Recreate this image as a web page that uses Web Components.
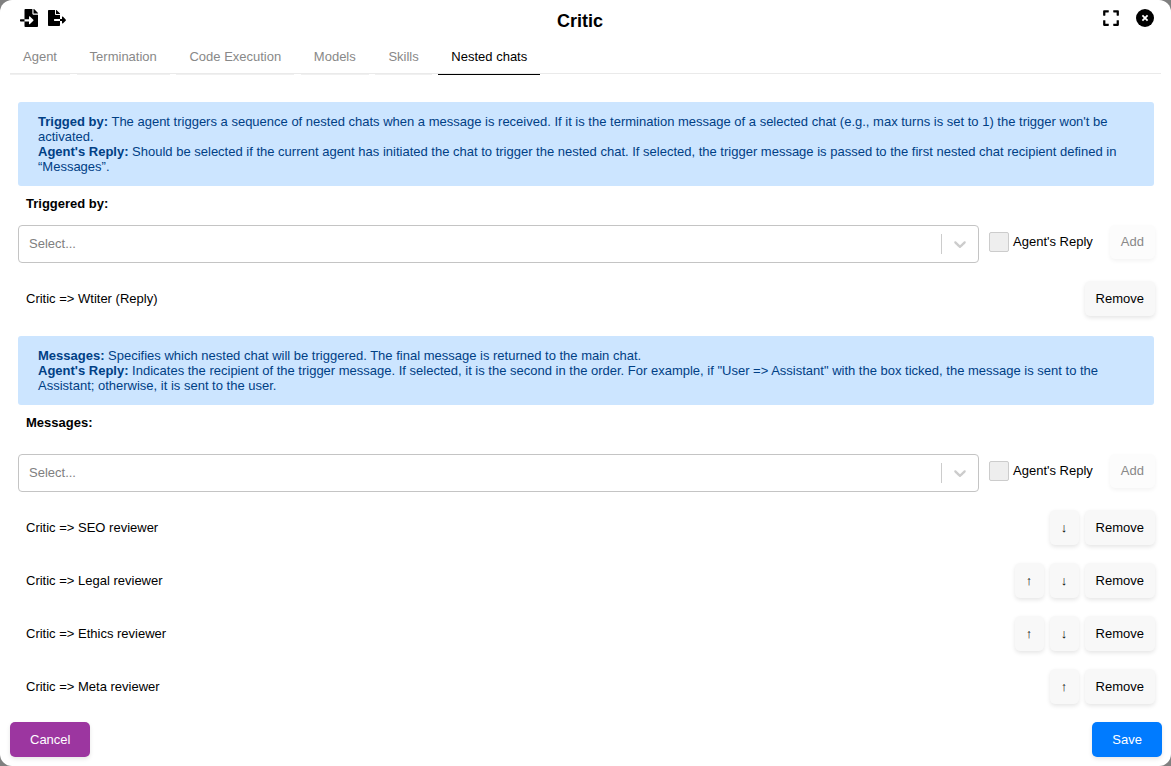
<!DOCTYPE html>
<html lang="en">
<head>
<meta charset="utf-8">
<meta name="viewport" content="width=device-width, initial-scale=1">
<title>Critic</title>
<style>
  html { background: #808080; }
  body { margin: 0; font: 13px/15px "Liberation Sans", Arial, sans-serif; color: #000; }
</style>
</head>
<body>
<agent-dialog></agent-dialog>
<script>
const define = (name, html, setup) => {
  const template = document.createElement('template');
  template.innerHTML = '<style>*{box-sizing:border-box}button,select{font:inherit;margin:0}</style>' + html;
  customElements.define(name, class extends HTMLElement {
    connectedCallback() {
      if (this.shadowRoot) return;
      this.attachShadow({ mode: 'open' }).append(template.content.cloneNode(true));
      if (setup) setup(this, this.shadowRoot);
    }
  });
};

define('ui-button', `
  <style>
    :host { display: block; flex: none; }
    button { display: block; height: 35px; min-width: 29px; padding: 0 11px; border: 0; border-radius: 5px;
      background: #f8f8f8; color: #000; box-shadow: 0 2px 4px rgba(0,0,0,.1); cursor: pointer; }
    button:disabled { height: 34px; padding-bottom: 1px; background: #fcfcfc; color: #888; box-shadow: 0 2px 4px rgba(0,0,0,.05); cursor: default; }
    :host([kind]) button { padding: 0 20px; color: #fff; }
    :host([kind=cancel]) button { background: #9c36a0; }
    :host([kind=save]) button { background: #007bff; }
  </style>
  <button type="button"><slot></slot></button>`, (host, root) => {
  const button = root.querySelector('button');
  button.disabled = host.hasAttribute('disabled');
  if (host.hasAttribute('label')) button.setAttribute('aria-label', host.getAttribute('label'));
});

define('icon-button', `
  <style>
    :host { display: block; }
    button { display: grid; place-items: center; width: 18px; height: 18px; padding: 0; border: 0; background: none; cursor: pointer; }
    ::slotted(svg) { display: block; width: 18px; height: 18px; fill: #000; }
  </style>
  <button type="button"><slot></slot></button>`, (host, root) => {
  root.querySelector('button').setAttribute('aria-label', host.getAttribute('label'));
});

define('dialog-header', `
  <style>
    :host { display: grid; grid-template-columns: 1fr auto 1fr; align-items: start; padding: 9px 17px 0 6px; height: 40px; }
    .group { display: flex; gap: 10px; padding-left: 14px; }
    .end { justify-content: flex-end; gap: 16px; }
    h1 { margin: 0; font-size: 18px; line-height: 24px; font-weight: bold; }
  </style>
  <div class="group">
    <icon-button label="Import"><svg viewBox="0 0 512 512"><path d="M16 288c-8.8 0-16 7.2-16 16v32c0 8.8 7.2 16 16 16h112v-64zm489-183L407.1 7c-4.5-4.5-10.6-7-17-7H384v128h128v-6.1c0-6.3-2.5-12.4-7-16.9zm-153 31V0H152c-13.3 0-24 10.7-24 24v264h128v-65.2c0-14.3 17.3-21.4 27.4-11.3L379 308c6.6 6.7 6.6 17.4 0 24l-95.7 96.4c-10.1 10.1-27.4 3-27.4-11.3V352H128v136c0 13.3 10.7 24 24 24h336c13.3 0 24-10.7 24-24V160H376c-13.2 0-24-10.8-24-24z"/></svg></icon-button>
    <icon-button label="Export"><svg viewBox="0 0 576 512"><path d="M384 121.9c0-6.3-2.5-12.4-7-16.9L279.1 7c-4.5-4.5-10.6-7-17-7H256v128h128zM571 308l-95.7-96.4c-10.1-10.1-27.4-3-27.4 11.3V288h-64v64h64v65.2c0 14.3 17.3 21.4 27.4 11.3L571 332c6.6-6.6 6.6-17.4 0-24zm-379 28v-32c0-8.8 7.2-16 16-16h176V160H248c-13.2 0-24-10.8-24-24V0H24C10.7 0 0 10.7 0 24v464c0 13.3 10.7 24 24 24h336c13.3 0 24-10.7 24-24V352H208c-8.8 0-16-7.2-16-16z"/></svg></icon-button>
  </div>
  <h1><slot></slot></h1>
  <div class="group end">
    <icon-button label="Full screen"><svg viewBox="0 0 448 512"><path d="M0 180V56c0-13.3 10.7-24 24-24h124c6.6 0 12 5.4 12 12v40c0 6.6-5.4 12-12 12H64v84c0 6.6-5.4 12-12 12H12c-6.6 0-12-5.4-12-12zM288 44v40c0 6.6 5.4 12 12 12h84v84c0 6.6 5.4 12 12 12h40c6.6 0 12-5.4 12-12V56c0-13.3-10.7-24-24-24H300c-6.6 0-12 5.4-12 12zm148 276h-40c-6.6 0-12 5.4-12 12v84h-84c-6.6 0-12 5.4-12 12v40c0 6.6 5.4 12 12 12h124c13.3 0 24-10.7 24-24V332c0-6.6-5.4-12-12-12zM160 468v-40c0-6.6-5.4-12-12-12H64v-84c0-6.6-5.4-12-12-12H12c-6.6 0-12 5.4-12 12v124c0 13.3 10.7 24 24 24h124c6.6 0 12-5.4 12-12z"/></svg></icon-button>
    <icon-button label="Close"><svg viewBox="0 0 18 18"><circle cx="9" cy="9" r="9"/><path d="M6.4 6.4l5.2 5.2M11.6 6.4l-5.2 5.2" stroke="#fff" stroke-width="1.8"/></svg></icon-button>
  </div>`);

define('tab-bar', `
  <style>
    :host { display: block; margin: 0 10px; border-bottom: 1px solid #eaeaea; }
  </style>
  <slot></slot>`, host => host.setAttribute('role', 'tablist'));

define('tab-item', `
  <style>
    :host { display: inline-block; vertical-align: top; margin: 0 3px -2px 0; }
    button { display: block; height: 35px; padding: 0 13px 1px; border: 0; border-bottom: 1px solid #f0f0f0;
      background: none; color: #888; cursor: pointer; }
    :host([active]) button { color: #000; border-bottom-color: #000; }
  </style>
  <button type="button" role="tab"><slot></slot></button>`, (host, root) => {
  root.querySelector('button').setAttribute('aria-selected', host.hasAttribute('active'));
});

define('info-box', `
  <style>
    :host { display: block; margin-right: 1px; padding: 12px 20px; border-radius: 3px; background: #cce5ff; color: #004085; }
  </style>
  <slot></slot>`);

define('chat-picker', `
  <style>
    :host { display: flex; align-items: flex-start; }
    .select { position: relative; flex: 1; min-width: 0; margin-right: 10px; }
    select { appearance: none; display: block; width: 100%; height: 38px; padding: 0 46px 2px 10px;
      border: 1px solid #c4c4c4; border-radius: 4px; background: #fff; color: #808080; }
    .indicator { position: absolute; top: 9px; right: 1px; display: flex; width: 37px; height: 20px; padding: 0 8px;
      border-left: 1px solid #ccc; pointer-events: none; }
    svg { width: 20px; height: 20px; fill: #ccc; }
    label { display: flex; align-items: center; gap: 4px; height: 33px; margin-right: 17px; white-space: nowrap; }
    input { appearance: none; width: 20px; height: 20px; margin: 0; border: 1px solid #ccc; border-radius: 2px; background: #eee; }
    input:checked { background: #007bff; }
  </style>
  <div class="select">
    <select><option>Select...</option></select>
    <span class="indicator"><svg viewBox="0 0 20 20" aria-hidden="true"><path d="M4.516 7.548c.436-.446 1.043-.481 1.576 0L10 11.295l3.908-3.747c.533-.481 1.141-.446 1.574 0 .436.445.408 1.197 0 1.615-.406.418-4.695 4.502-4.695 4.502-.217.223-.502.335-.787.335s-.57-.112-.789-.335c0 0-4.287-4.084-4.695-4.502s-.436-1.17 0-1.615z"/></svg></span>
  </div>
  <label><input type="checkbox">Agent's Reply</label>
  <ui-button disabled>Add</ui-button>`, (host, root) => {
  root.querySelector('select').setAttribute('aria-label', host.getAttribute('label'));
});

define('chat-row', `
  <style>
    :host { display: flex; align-items: center; gap: 6px; margin-top: 18px; padding-left: 8px; }
    .name { flex: 1; min-width: 0; }
  </style>
  <span class="name"><slot></slot></span>
  <slot name="move"></slot>
  <ui-button>Remove</ui-button>`);

define('chat-section', `
  <style>
    :host { display: block; margin-bottom: 20px; }
    h2 { margin: 10px 0 14px 8px; font-size: 13px; line-height: 15px; }
    :host([roomy]) h2 { margin-bottom: 24px; }
  </style>
  <slot name="info"></slot>
  <h2></h2>
  <slot></slot>`, (host, root) => {
  root.querySelector('h2').textContent = host.getAttribute('heading');
});

define('agent-dialog', `
  <style>
    :host { display: flex; flex-direction: column; min-height: 100vh; background: #fff; border-radius: 12px; }
    main { flex: 1; padding: 28px 16px 0 18px; }
    chat-section:last-child { margin-bottom: 0; }
    footer { display: flex; justify-content: space-between; padding: 18px 9px 9px 10px; }
  </style>
  <dialog-header>Critic</dialog-header>
  <tab-bar>
    <tab-item>Agent</tab-item>
    <tab-item>Termination</tab-item>
    <tab-item>Code Execution</tab-item>
    <tab-item>Models</tab-item>
    <tab-item>Skills</tab-item>
    <tab-item active>Nested chats</tab-item>
  </tab-bar>
  <main>
    <chat-section heading="Triggered by:">
      <info-box slot="info"><b>Trigged by:</b> The agent triggers a sequence of nested chats when a message is received. If it is the termination message of a selected chat (e.g., max turns is set to 1) the trigger won't be activated.<br><b>Agent's Reply:</b> Should be selected if the current agent has initiated the chat to trigger the nested chat. If selected, the trigger message is passed to the first nested chat recipient defined in “Messages”.</info-box>
      <chat-picker label="Triggered by"></chat-picker>
      <chat-row>Critic =&gt; Wtiter (Reply)</chat-row>
    </chat-section>
    <chat-section heading="Messages:" roomy>
      <info-box slot="info"><b>Messages:</b> Specifies which nested chat will be triggered. The final message is returned to the main chat.<br><b>Agent's Reply:</b> Indicates the recipient of the trigger message. If selected, it is the second in the order. For example, if "User =&gt; Assistant" with the box ticked, the message is sent to the Assistant; otherwise, it is sent to the user.</info-box>
      <chat-picker label="Messages"></chat-picker>
      <chat-row>Critic =&gt; SEO reviewer<ui-button slot="move" label="Move down">↓</ui-button></chat-row>
      <chat-row>Critic =&gt; Legal reviewer<ui-button slot="move" label="Move up">↑</ui-button><ui-button slot="move" label="Move down">↓</ui-button></chat-row>
      <chat-row>Critic =&gt; Ethics reviewer<ui-button slot="move" label="Move up">↑</ui-button><ui-button slot="move" label="Move down">↓</ui-button></chat-row>
      <chat-row>Critic =&gt; Meta reviewer<ui-button slot="move" label="Move up">↑</ui-button></chat-row>
    </chat-section>
  </main>
  <footer>
    <ui-button kind="cancel">Cancel</ui-button>
    <ui-button kind="save">Save</ui-button>
  </footer>`);
</script>
</body>
</html>
